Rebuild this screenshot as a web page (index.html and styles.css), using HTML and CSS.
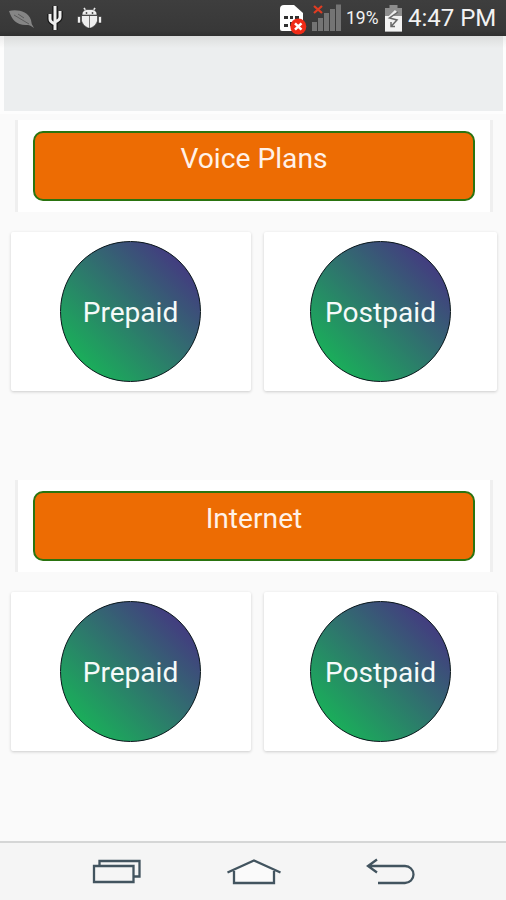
FILE: index.html
```
<!DOCTYPE html>
<html lang="en">
<head>
    <meta charset="UTF-8">
    <meta name="viewport" content="width=device-width, initial-scale=1.0">
    <title>Plans</title>
    <link rel="stylesheet" href="styles.css">
</head>
<body>
    <header class="status-bar">
        <svg class="notifications" width="110" height="36" viewBox="0 0 110 36">
            <path d="M9 11C17 9 28 11 31 20Q31 24 34 28Q30 25 28 25C17 26 12 20 9 11Z" fill="#858585"/>
            <path d="M14 15L29 24M18 14L24 18" stroke="#5c5c5c" fill="none"/>
            <path d="M55 6V30M50 14V19Q50 22 55 24M60 11V17Q60 20 55 22" stroke="#161616" stroke-width="5.500" fill="none"/>
            <path d="M55 6V30M50 14V19Q50 22 55 24M60 11V17Q60 20 55 22" stroke="#eee" stroke-width="3" fill="none"/>
            <path d="M84 8L86 11M95 8L93 11" stroke="#eee" stroke-width="1.600"/>
            <path d="M82 15Q82 10 87 9.500H92Q97 10 97 15ZM81.500 15.500H97.500V21Q96 26 91 28H88Q83 26 81.500 21ZM77.500 16.500H80.500V23H77.500ZM98.500 16.500H101.500V23H98.500Z" fill="#eee" stroke="#1c1c1c" stroke-width=".5"/>
            <path d="M89.500 16V28" stroke="#777"/>
            <circle cx="86.500" cy="13" r=".9" fill="#444"/>
            <circle cx="92.500" cy="13" r=".9" fill="#444"/>
        </svg>
        <div class="system">
            <svg width="66" height="36" viewBox="278 0 66 36">
                <path d="M280 9Q280 5 284 5H294L303 13V31H282Q280 31 280 29Z" fill="#fff"/>
                <path d="M284 16H288V19H284ZM290 16H293V19H290ZM295 16H299V19H295ZM284 24H288V27H284ZM290 22H293V26H290Z" fill="#303030"/>
                <circle cx="298.300" cy="26.500" r="8" fill="#f02b17"/>
                <path d="M295 23.300L301.500 29.700M301.500 23.300L295 29.700" stroke="#fff" stroke-width="2.500"/>
                <path d="M312 22H317V31H312ZM318 18H323V31H318ZM324 13H329V31H324ZM330 9H335V31H330ZM336 4.500H341V31H336Z" fill="#747474"/>
                <path d="M314 6L322 13M322 6L314 13" stroke="#e03c22" stroke-width="2.300"/>
            </svg>
            <span class="percent">19%</span>
            <svg width="18" height="36" viewBox="385 0 18 36">
                <path d="M389.500 5H397.500V8H402V31.500H385V8H389.500Z" fill="#8d8d8d"/>
                <path d="M385 16H402V31.500H385Z" fill="#f3f3f3"/>
                <path d="M396 11L389 18L397 20L391 27" stroke="#eee" stroke-width="3" fill="none"/>
                <path d="M398 12L389.500 18L397 20L391 26.500M391 22V26.500H395" stroke="#686868" stroke-width="1.500" fill="none"/>
            </svg>
            <span class="time">4:47 PM</span>
        </div>
    </header>

    <div class="app-bar">
        <div class="toolbar"></div>
    </div>

    <main>
        <section class="plans">
            <div class="title-card">
                <h2>Voice Plans</h2>
            </div>
            <div class="cards">
                <div class="card"><a class="circle">Prepaid</a></div>
                <div class="card"><a class="circle">Postpaid</a></div>
            </div>
        </section>
        <section class="plans">
            <div class="title-card">
                <h2>Internet</h2>
            </div>
            <div class="cards">
                <div class="card"><a class="circle">Prepaid</a></div>
                <div class="card"><a class="circle">Postpaid</a></div>
            </div>
        </section>
    </main>

    <nav class="nav-bar">
        <svg width="50" height="26" viewBox="0 0 50 26">
            <path d="M7.500 6.500V2H47.500V17.500H42" class="line"/>
            <path d="M2 7H41.500V23H2Z" class="line"/>
        </svg>
        <svg width="56" height="28" viewBox="0 0 56 28">
            <path d="M8 12V25H48V12L28 3Z" fill="#fafafa"/>
            <path d="M1.500 14.500L28 2.500L54.500 14.500M8 13V25H48V13" class="line"/>
        </svg>
        <svg width="50" height="28" viewBox="0 0 50 28">
            <path d="M12 1.500L3 8L12 14.500M3.500 8H40A8.500 8.500 0 0 1 40 25H13" class="line"/>
        </svg>
    </nav>
</body>
</html>
```

FILE: styles.css
```
* {
    box-sizing: border-box;
}
body {
    margin: 0;
    height: 900px;
    display: flex;
    flex-direction: column;
    background: #fafafa;
    font-family: Roboto, sans-serif;
    overflow: hidden;
}
svg {
    display: block;
    flex: none;
}
.status-bar {
    height: 36px;
    display: flex;
    justify-content: space-between;
    background: linear-gradient(#3e3e3e, #383838 85%, #303030);
    color: #f2f2f2;
}
.system {
    display: flex;
    align-items: center;
    padding-right: 10px;
}
.percent {
    width: 41px;
    padding-left: 2px;
    font-size: 17.5px;
    line-height: 36px;
    white-space: nowrap;
}
.time {
    width: 93px;
    padding-left: 5px;
    font-size: 24px;
    line-height: 37px;
    white-space: nowrap;
}
.app-bar {
    height: 78px;
    padding: 0 3px 3px 4px;
    background: linear-gradient(#ececec, #fdfdfd 12px);
}
.toolbar {
    height: 75px;
    background: linear-gradient(#dcdddd, #eceeef 12px, #eceeef);
}
main {
    flex: 1;
    padding-top: 6px;
}
.plans {
    height: 360px;
}
.title-card {
    height: 92px;
    margin: 0 13px 0 15px;
    padding: 11px 15px;
    border: solid #efefef;
    border-width: 0 3px;
    background: #fff;
}
h2 {
    height: 70px;
    margin: 0;
    border: 2px solid #2a7410;
    border-radius: 10px;
    background: #ed6c03;
    color: #fff1e8;
    font-size: 28.2px;
    font-weight: 400;
    line-height: 51px;
    text-align: center;
}
.cards {
    display: grid;
    grid-template-columns: 240px 233px;
    gap: 13px;
    padding: 20px 0 0 11px;
}
.card {
    height: 159px;
    padding: 9px 0 0 49px;
    border-radius: 2px;
    background: #fff;
    box-shadow: 0 1px 3px #ccc;
}
.card + .card {
    padding-left: 46px;
}
.circle {
    display: block;
    width: 141px;
    height: 141px;
    border: 1px solid #08151a;
    border-radius: 50%;
    background: linear-gradient(45deg, #1aae5a 14%, #433c80 86%);
    color: #f5faf9;
    font-size: 28.1px;
    line-height: 141px;
    text-align: center;
}
.nav-bar {
    height: 59px;
    display: flex;
    align-items: center;
    justify-content: space-between;
    padding: 0 91px 0 92px;
    border-top: 2px solid #d5d6d6;
    background: #f5f5f5;
}
.line {
    fill: none;
    stroke: #42545f;
    stroke-width: 2.3;
}
```
